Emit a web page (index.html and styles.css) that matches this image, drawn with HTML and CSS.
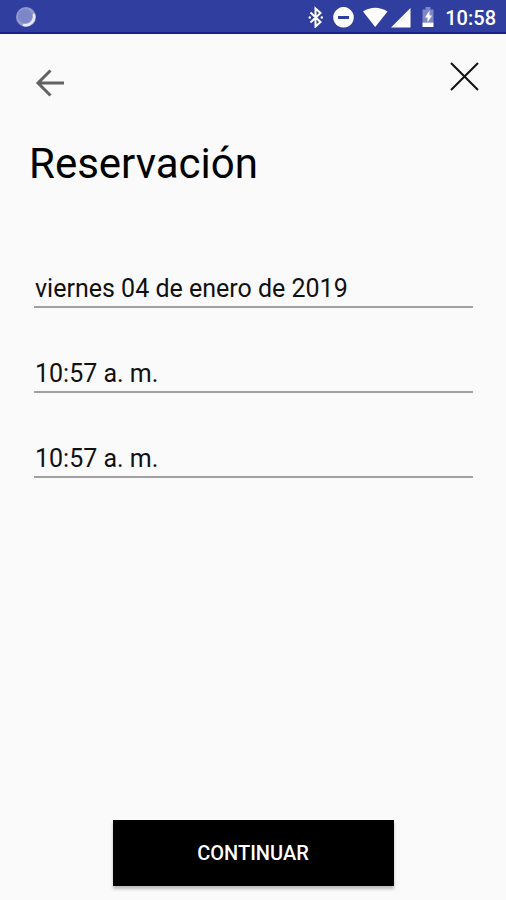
FILE: index.html
```html
<!DOCTYPE html>
<html lang="es">
<head>
<meta charset="utf-8">
<meta name="viewport" content="width=device-width, initial-scale=1">
<title>Reservación</title>
<link rel="stylesheet" href="styles.css">
</head>
<body>
<header class="status">
  <svg class="status-app" width="22" height="22" viewBox="0 0 22 22" aria-hidden="true">
    <circle cx="11" cy="12" r="10" fill="#9299cf"/>
    <circle cx="10" cy="11" r="7" fill="#7d86c6"/>
    <path d="M19 10A8.500 8.500 0 0 1 9 20" fill="none" stroke="#e9eaf7" stroke-width="2.500" stroke-linecap="round"/>
  </svg>
  <svg class="status-icons" width="130" height="24" viewBox="0 0 130 24" fill="#fff" aria-hidden="true">
    <path d="M2.500 8.500L12.500 18L7.500 22.500V4.500L12.500 9L2.500 18.500" fill="none" stroke="#fff" stroke-width="2"/>
    <circle cx="1.800" cy="13.500" r="1.200"/>
    <circle cx="13.800" cy="13.500" r="1.200"/>
    <path fill-rule="evenodd" d="M35.500 3a10.300 10.300 0 1 0 .01 0zM30 12h11v3H30z"/>
    <path d="M55 7.500Q67 0 79.500 7.500L67.200 23z"/>
    <path d="M102.500 4v19.500H83z"/>
    <path d="M114.500 5.500h3V3h5v2.500h3v13h-11z" fill="#7d87c5"/>
    <path d="M114.500 18.500h11V23h-11z"/>
    <path d="M121.500 6.500l-4.500 7h2.500v5l4.500-7h-2.500z"/>
  </svg>
  <time class="clock">10:58</time>
</header>
<nav class="toolbar">
  <button class="icon-button" type="button" aria-label="Volver">
    <svg width="32" height="32" viewBox="0 0 32 32" fill="none" stroke="#626262" stroke-width="3" aria-hidden="true">
      <path d="M30 18H4M16.500 5.500L4 18L16.500 30.500"/>
    </svg>
  </button>
  <button class="icon-button" type="button" aria-label="Cerrar">
    <svg width="32" height="32" viewBox="0 0 32 32" fill="none" stroke="#111" stroke-width="2" aria-hidden="true">
      <path d="M2 3L29 30M29 3L2 30"/>
    </svg>
  </button>
</nav>
<main class="content">
  <h1 class="title">Reservación</h1>
  <form class="form" id="reserva">
    <input class="field" type="text" aria-label="Fecha" value="viernes 04 de enero de 2019">
    <input class="field" type="text" aria-label="Hora de inicio" value="10:57 a. m.">
    <input class="field" type="text" aria-label="Hora de fin" value="10:57 a. m.">
  </form>
</main>
<footer class="footer">
  <button class="submit" type="submit" form="reserva">CONTINUAR</button>
</footer>
</body>
</html>
```

FILE: styles.css
```css
* {
  box-sizing: border-box;
}

body {
  margin: 0;
  min-height: 100vh;
  display: flex;
  flex-direction: column;
  background: #fafafa;
  color: #111;
  font-family: Roboto, "Liberation Sans", sans-serif;
}

.status {
  display: flex;
  align-items: center;
  height: 34px;
  padding: 0 10px 0 15px;
  background: #303f9f;
  border-bottom: 2px solid #1a1f8c;
  color: #fff;
}

.status-icons {
  margin-left: auto;
}

.clock {
  margin-left: 7px;
  padding-top: 4px;
  font-size: 20px;
  font-weight: 500;
  line-height: 24px;
}

.toolbar {
  display: flex;
  justify-content: space-between;
  padding: 26px 25px 0 34px;
}

.icon-button {
  display: flex;
  padding: 0;
  border: 0;
  background: none;
}

.icon-button:first-child {
  padding-top: 5px;
}

.content {
  flex: 1;
  padding: 0 33px 0 29px;
}

.title {
  margin: 41px 0 0;
  color: #000;
  font-size: 42px;
  font-weight: 400;
  line-height: 52px;
}

.form {
  display: flex;
  flex-direction: column;
  gap: 40px;
  margin-top: 73px;
  padding-left: 5px;
}

.field {
  width: 100%;
  height: 45px;
  padding: 8px 0 0 1px;
  border: 0;
  border-bottom: 2px solid #a0a0a0;
  background: none;
  color: #111;
  font-family: inherit;
  font-size: 25px;
}

.footer {
  display: flex;
  justify-content: center;
  padding: 0 0 14px;
}

.submit {
  width: 56%;
  max-width: 281px;
  height: 66px;
  padding: 0;
  border: 0;
  background: #000;
  box-shadow: 0 3px 3px rgba(0, 0, 0, 0.25);
  color: #fff;
  font-family: inherit;
  font-size: 20px;
  font-weight: 500;
}
```
